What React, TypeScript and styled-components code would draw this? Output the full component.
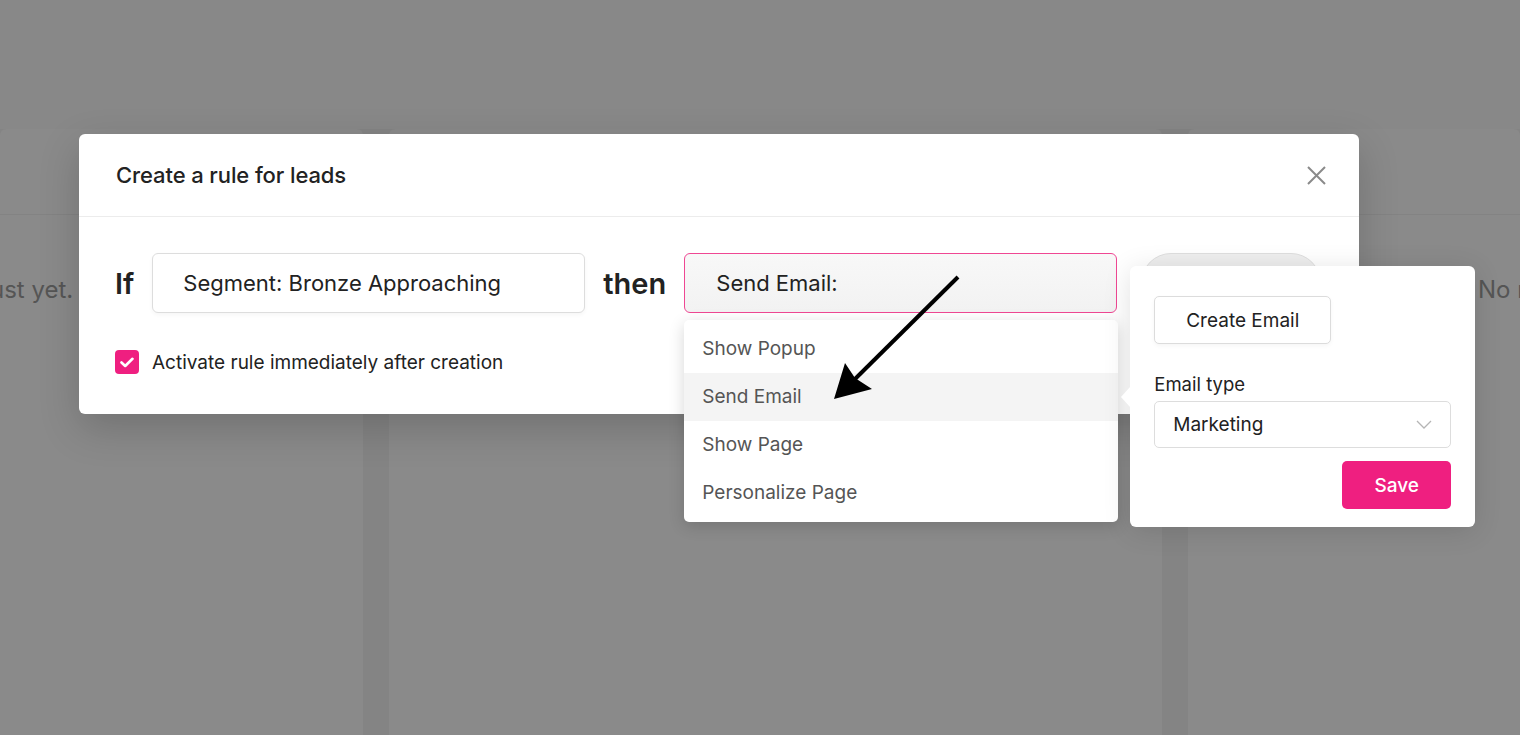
import React from 'react';
import styled, { createGlobalStyle } from 'styled-components';

const PINK = '#ef1f80';

const GlobalStyle = createGlobalStyle`
	html, body {
		margin: 0;
		padding: 0;
		height: 100%;
		overflow: hidden;
		background: #888888;
		font-family: Inter, "Liberation Sans", sans-serif;
	}
	* {
		box-sizing: border-box;
	}
`;

const Page = styled.main`
	position: relative;
	display: flex;
	flex-direction: column;
	height: 100vh;
	overflow: hidden;
`;

const TopBar = styled.header`
	height: 129px;
	flex-shrink: 0;
	background: #888888;
`;

const Board = styled.section`
	flex: 1;
	display: grid;
	grid-template-columns: 363px 773px 1fr;
	gap: 26px;
	background: #848484;
`;

const Column = styled.article`
	background: #8a8a8a;
	border-radius: 6px 6px 0 0;
	overflow: hidden;
`;

const ColumnHead = styled.div`
	height: 86px;
	border-bottom: 1px solid #838383;
`;

const EmptyText = styled.p<{ $indent: number }>`
	margin: 0 0 0 ${p => p.$indent}px;
	padding-top: 60px;
	white-space: nowrap;
	font-size: 24px;
	line-height: 30px;
	color: #555555;
`;

const Modal = styled.div`
	position: absolute;
	top: 134px;
	left: 79px;
	width: 1280px;
	background: #ffffff;
	border-radius: 6px;
	box-shadow: 0 14px 40px rgba(0, 0, 0, 0.18);
`;

const ModalHeader = styled.div`
	height: 83px;
	padding: 0 33px 0 37px;
	display: flex;
	align-items: center;
	justify-content: space-between;
	border-bottom: 1px solid #ececec;
`;

const Title = styled.h2`
	margin: 0;
	font-size: 22px;
	font-weight: 500;
	color: #222222;
	letter-spacing: -0.1px;
`;

const CloseButton = styled.button`
	display: flex;
	padding: 0;
	border: none;
	background: none;
	cursor: pointer;
`;

const ModalBody = styled.div`
	padding: 36px 37px 40px 36px;
`;

const RuleRow = styled.div`
	display: flex;
	align-items: center;
`;

const Keyword = styled.span<{ $lead?: boolean }>`
	font-size: 29px;
	font-weight: 600;
	color: #222222;
	margin: 0 18px 0 ${p => (p.$lead ? 0 : 18)}px;
`;

const Field = styled.div<{ $active?: boolean }>`
	position: relative;
	width: 433px;
	height: 60px;
	display: flex;
	align-items: center;
	padding-left: ${p => (p.$active ? 31 : 30)}px;
	border: 1px solid ${p => (p.$active ? '#ef4793' : '#dddddd')};
	border-radius: 6px;
	background: ${p => (p.$active ? 'linear-gradient(#f8f8f8, #f2f2f2)' : '#ffffff')};
	box-shadow: ${p => (p.$active ? 'none' : '0 2px 4px rgba(0, 0, 0, 0.04)')};
	font-size: 22px;
	color: #222222;
`;

const Menu = styled.ul`
	position: absolute;
	top: 66px;
	left: -1px;
	width: 434px;
	margin: 0;
	padding: 5px 0;
	list-style: none;
	background: #ffffff;
	border-radius: 5px;
	box-shadow: 0 4px 16px rgba(0, 0, 0, 0.16);
	z-index: 2;
`;

const MenuItem = styled.li<{ $active?: boolean }>`
	height: 48px;
	line-height: 48px;
	padding-left: 18px;
	font-size: 19px;
	color: #555555;
	background: ${p => (p.$active ? '#f4f4f4' : 'transparent')};
`;

const PillHolder = styled.div`
	position: relative;
	margin-left: 24px;
`;

const Pill = styled.div`
	width: 180px;
	height: 60px;
	border-radius: 30px;
	border: 1px solid #dedede;
	background: #eeeeee;
`;

const Popover = styled.div`
	position: absolute;
	top: 13px;
	left: -11px;
	width: 345px;
	padding: 30px 24px 18px;
	background: #ffffff;
	border-radius: 6px;
	box-shadow: 0 4px 28px rgba(0, 0, 0, 0.12);
	z-index: 3;

	&::before {
		content: '';
		position: absolute;
		left: -9px;
		top: 121px;
		border-top: 10px solid transparent;
		border-bottom: 10px solid transparent;
		border-right: 9px solid #ffffff;
	}
`;

const OutlineButton = styled.button`
	width: 177px;
	height: 48px;
	border: 1px solid #dcdcdc;
	border-radius: 5px;
	background: #ffffff;
	font-family: inherit;
	font-size: 19px;
	color: #222222;
	box-shadow: 0 2px 4px rgba(0, 0, 0, 0.04);
`;

const Label = styled.div`
	margin: 28px 0 5px;
	font-size: 18.5px;
	line-height: 24px;
	color: #222222;
`;

const SelectBox = styled.div`
	height: 47px;
	display: flex;
	align-items: center;
	justify-content: space-between;
	padding: 0 18px;
	border: 1px solid #dddddd;
	border-radius: 5px;
	font-size: 19px;
	color: #222222;
`;

const Actions = styled.div`
	display: flex;
	justify-content: flex-end;
	margin-top: 13px;
`;

const SaveButton = styled.button`
	width: 109px;
	height: 48px;
	border: none;
	border-radius: 5px;
	background: ${PINK};
	font-family: inherit;
	font-size: 19px;
	font-weight: 500;
	color: #ffffff;
`;

const CheckRow = styled.label`
	display: flex;
	align-items: center;
	gap: 13px;
	margin-top: 37px;
	font-size: 19px;
	color: #222222;
`;

const CheckBox = styled.span`
	width: 24px;
	height: 24px;
	display: flex;
	align-items: center;
	justify-content: center;
	border-radius: 4px;
	background: ${PINK};
`;

const Pointer = styled.svg`
	position: absolute;
	left: 830px;
	top: 270px;
	pointer-events: none;
	z-index: 5;
`;

const actions = ['Show Popup', 'Send Email', 'Show Page', 'Personalize Page'];

const App: React.FC = () => {
	return (
		<Page>
			<GlobalStyle />
			<TopBar />
			<Board>
				<Column>
					<ColumnHead />
					<EmptyText $indent={-10}>ust yet.</EmptyText>
				</Column>
				<Column>
					<ColumnHead />
				</Column>
				<Column>
					<ColumnHead />
					<EmptyText $indent={290}>No rules yet.</EmptyText>
				</Column>
			</Board>

			<Modal>
				<ModalHeader>
					<Title>Create a rule for leads</Title>
					<CloseButton aria-label="Close">
						<svg width="19" height="19" viewBox="0 0 19 19">
							<path d="M1 1 L18 18 M18 1 L1 18" stroke="#8a8a8a" strokeWidth="2" />
						</svg>
					</CloseButton>
				</ModalHeader>
				<ModalBody>
					<RuleRow>
						<Keyword $lead>If</Keyword>
						<Field>Segment: Bronze Approaching</Field>
						<Keyword>then</Keyword>
						<Field $active>
							Send Email:
							<Menu>
								{actions.map(a => (
									<MenuItem key={a} $active={a === 'Send Email'}>{a}</MenuItem>
								))}
							</Menu>
						</Field>
						<PillHolder>
							<Pill />
							<Popover>
								<OutlineButton>Create Email</OutlineButton>
								<Label>Email type</Label>
								<SelectBox>
									Marketing
									<svg width="16" height="9" viewBox="0 0 16 9">
										<path d="M1 1 L8 8 L15 1" fill="none" stroke="#b5b5b5" strokeWidth="1.3" />
									</svg>
								</SelectBox>
								<Actions>
									<SaveButton>Save</SaveButton>
								</Actions>
							</Popover>
						</PillHolder>
					</RuleRow>
					<CheckRow>
						<CheckBox>
							<svg width="14" height="11" viewBox="0 0 14 11">
								<path d="M1.5 5.5 L5.2 9 L12.5 1.8" fill="none" stroke="#ffffff" strokeWidth="2.6" strokeLinecap="round" strokeLinejoin="round" />
							</svg>
						</CheckBox>
						Activate rule immediately after creation
					</CheckRow>
				</ModalBody>
			</Modal>

			<Pointer width="135" height="135" viewBox="0 0 135 135">
				<line x1="128" y1="7" x2="24" y2="110" stroke="#000000" strokeWidth="4" />
				<polygon points="4,129 15,93 25,108 42,119" fill="#000000" />
			</Pointer>
		</Page>
	);
};

export default App;
